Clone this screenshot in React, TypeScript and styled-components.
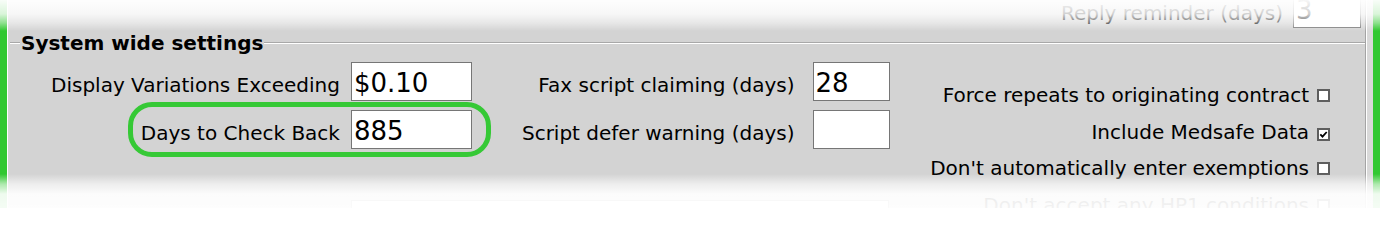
import React from 'react';
import styled, { createGlobalStyle } from 'styled-components';

const GlobalStyle = createGlobalStyle`
  html, body {
    margin: 0;
    padding: 0;
    background: #ffffff;
  }
  body {
    font-family: 'DejaVu Sans', Verdana, sans-serif;
    color: #000;
  }
`;

const Frame = styled.div`
  position: relative;
  display: flex;
  width: 1380px;
  height: 208px;
  overflow: hidden;
  background: #d3d3d3;
`;

const Rail = styled.div`
  flex: none;
  width: 7px;
  background: #31c831;
`;

const Gutter = styled.div`
  flex: none;
  width: 6px;
  border-left: 1px solid #ffffff;
  background: #d9d9d9;
`;

const Panel = styled.div`
  flex: 1;
  display: flex;
  flex-direction: column;
  min-width: 0;
  border-left: 1px solid #ffffff;
  border-right: 1px solid #a4a4a4;
`;

const TopRow = styled.div`
  display: flex;
  justify-content: flex-end;
  align-items: flex-end;
  gap: 10px;
  margin-top: -11px;
  padding-right: 4px;
`;

const SectionHeader = styled.div`
  display: flex;
  align-items: center;
  height: 24px;
  margin-top: 3px;
  padding-left: 2px;

  &::before,
  &::after {
    content: '';
    height: 0;
    border-top: 1px solid #a8a8a8;
    border-bottom: 1px solid #ffffff;
  }
  &::before {
    width: 10px;
  }
  &::after {
    flex: 1;
  }
`;

const Legend = styled.span`
  padding: 0 1px;
  font-size: 20px;
  font-weight: bold;
  line-height: 24px;
  white-space: nowrap;
`;

const Body = styled.div`
  display: flex;
  align-items: flex-start;
  margin-top: 7px;
  padding: 0 35px 0 43px;
`;

const FieldColumns = styled.div`
  display: flex;
  flex-direction: column;
`;

const GroupsRow = styled.div`
  display: flex;
  align-items: flex-start;
  gap: 50px;
`;

const FieldGroup = styled.div`
  display: flex;
  flex-direction: column;
  gap: 9px;
`;

const FieldRow = styled.div<{ $gap?: number }>`
  display: flex;
  justify-content: flex-end;
  align-items: baseline;
  gap: ${({ $gap }) => $gap ?? 11}px;
`;

const Highlight = styled.div`
  position: relative;
  display: flex;
  align-items: baseline;
  gap: 11px;

  &::after {
    content: '';
    position: absolute;
    top: -8px;
    bottom: -8px;
    left: -13px;
    right: -19px;
    border: 5px solid #36c936;
    border-radius: 24px;
    pointer-events: none;
  }
`;

const Label = styled.span`
  font-size: 20px;
  white-space: nowrap;
`;

const TopLabel = styled(Label)`
  margin-bottom: 3px;
`;

const Field = styled.div<{ $width: number }>`
  box-sizing: border-box;
  width: ${({ $width }) => $width}px;
  height: 39px;
  padding: 5px 2px 0;
  border: 1px solid #767676;
  background: #ffffff;
  font-size: 26px;
  line-height: 30px;
  white-space: nowrap;
  overflow: hidden;
`;

const WideField = styled.div`
  box-sizing: border-box;
  width: 538px;
  height: 39px;
  margin: 51px 0 0 300px;
  border: 1px solid #9a9a9a;
  background: #ffffff;
`;

const CheckGroup = styled.div`
  margin-left: auto;
  margin-top: 15px;
  display: flex;
  flex-direction: column;
`;

const CheckRow = styled.div`
  display: flex;
  justify-content: flex-end;
  align-items: baseline;
  gap: 8px;
  height: 36.5px;
  font-size: 20px;
  line-height: 36.5px;
`;

const CheckBox = styled.span`
  box-sizing: border-box;
  display: flex;
  align-items: center;
  justify-content: center;
  width: 13px;
  height: 13px;
  margin-bottom: 1px;
  border: 2px solid #5e5e5e;
  background: #ffffff;
`;

const Fade = styled.div<{ $edge: 'top' | 'bottom' }>`
  position: absolute;
  left: 0;
  right: 0;
  pointer-events: none;
  ${({ $edge }) =>
    $edge === 'top'
      ? `top: 0; height: 31px;
         background: linear-gradient(to bottom, rgba(255,255,255,0.97) 0px, rgba(255,255,255,0.82) 14px, rgba(255,255,255,0.45) 23px, rgba(255,255,255,0) 31px);`
      : `bottom: 0; height: 34px;
         background: linear-gradient(to bottom, rgba(255,255,255,0) 0px, rgba(255,255,255,0.6) 10px, rgba(255,255,255,0.92) 20px, rgba(255,255,255,0.95) 34px);`}
`;

const CHECKS = [
  { label: 'Force repeats to originating contract', checked: false },
  { label: 'Include Medsafe Data', checked: true },
  { label: "Don't automatically enter exemptions", checked: false },
  { label: "Don't accept any HP1 conditions", checked: false },
];

const Tick = () => (
  <svg width="9" height="9" viewBox="0 0 9 9">
    <polyline points="1.3,4.3 3.5,6.6 7.7,2" fill="none" stroke="#000" strokeWidth="1.8" />
  </svg>
);

export default function App() {
  return (
    <>
      <GlobalStyle />
      <Frame>
        <Rail />
        <Panel>
          <TopRow>
            <TopLabel>Reply reminder (days)</TopLabel>
            <Field $width={68}>3</Field>
          </TopRow>

          <SectionHeader>
            <Legend>System wide settings</Legend>
          </SectionHeader>

          <Body>
            <FieldColumns>
              <GroupsRow>
                <FieldGroup>
                  <FieldRow>
                    <Label>Display Variations Exceeding</Label>
                    <Field $width={121}>$0.10</Field>
                  </FieldRow>
                  <FieldRow>
                    <Highlight>
                      <Label>Days to Check Back</Label>
                      <Field $width={121}>885</Field>
                    </Highlight>
                  </FieldRow>
                </FieldGroup>

                <FieldGroup>
                  <FieldRow $gap={18}>
                    <Label>Fax script claiming (days)</Label>
                    <Field $width={77}>28</Field>
                  </FieldRow>
                  <FieldRow $gap={18}>
                    <Label>Script defer warning (days)</Label>
                    <Field $width={77}>{'\u00a0'}</Field>
                  </FieldRow>
                </FieldGroup>
              </GroupsRow>
              <WideField />
            </FieldColumns>

            <CheckGroup>
              {CHECKS.map((c) => (
                <CheckRow key={c.label}>
                  <span>{c.label}</span>
                  <CheckBox>{c.checked && <Tick />}</CheckBox>
                </CheckRow>
              ))}
            </CheckGroup>
          </Body>
        </Panel>
        <Gutter />
        <Rail />
        <Fade $edge="top" />
        <Fade $edge="bottom" />
      </Frame>
    </>
  );
}
